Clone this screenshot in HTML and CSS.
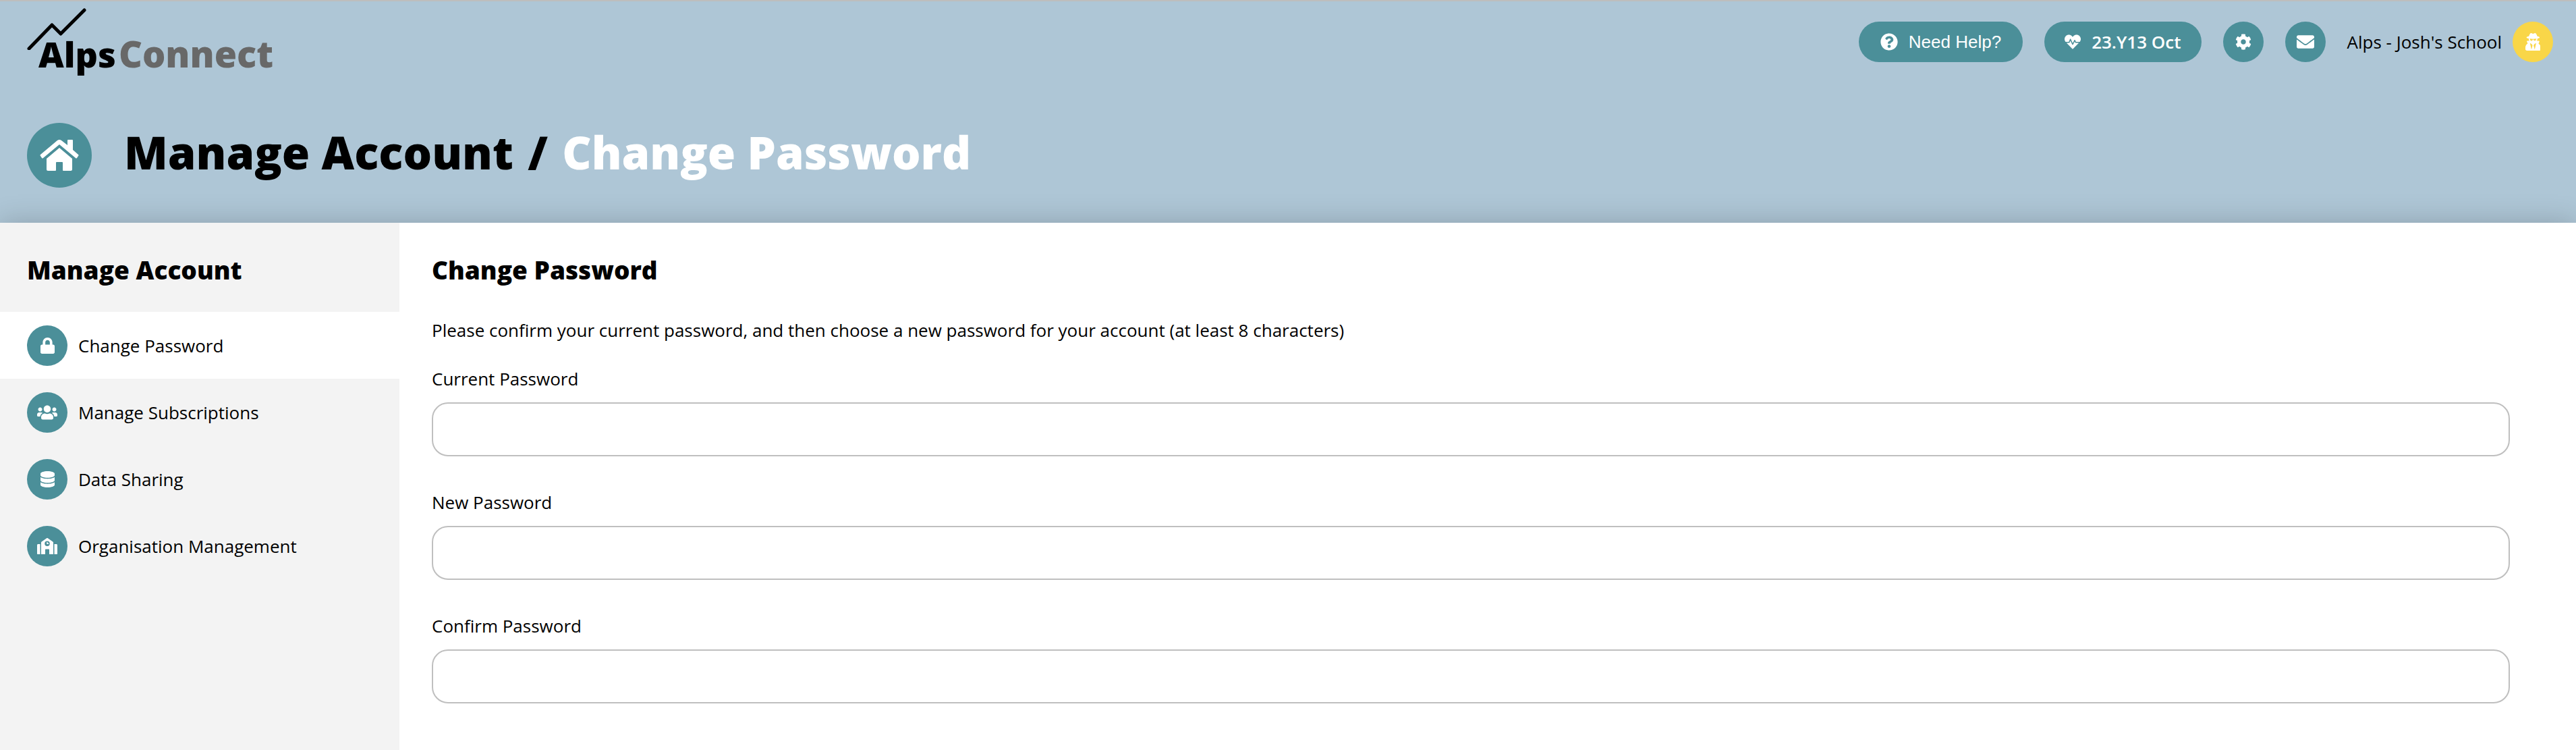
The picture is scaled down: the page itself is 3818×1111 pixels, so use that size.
FILE: index.html
```
<!DOCTYPE html>
<html lang="en">

<head>
  <meta charset="UTF-8">
  <meta name="viewport" content="width=device-width, initial-scale=1.0">
  <title>Alps Connect - Change Password</title>
  <link rel="stylesheet" href="styles.css">
</head>

<body>
  <header class="header">
    <div class="topbar">
      <a href="#" class="logo" aria-label="Alps Connect">
        <svg class="logo-peak" viewBox="0 0 88 62" aria-hidden="true">
          <path d="M3 60L37 25L50 38L85 3" />
        </svg>
        <span class="logo-alps">Alps</span>
        <span class="logo-connect">Connect</span>
      </a>
      <div class="tools">
        <button type="button" class="pill help">
          <svg viewBox="0 0 512 512" aria-hidden="true">
            <path d="M504 256c0 137-111 248-248 248S8 393 8 256 119 8 256 8s248 111 248 248zM262.700 90c-54.500 0-89.300 23-116.500 63.800-3.500 5.300-2.400 12.400 2.700 16.300l34.700 26.300c5.200 3.900 12.600 3 16.700-2.100 17.900-22.700 30.100-35.800 57.300-35.800 20.400 0 45.700 13.100 45.700 33 0 15-12.400 22.700-32.500 34C247.100 238.500 216 254.900 216 296v4c0 6.600 5.400 12 12 12h56c6.600 0 12-5.400 12-12v-1.300c0-28.500 83.200-29.600 83.200-106.700 0-58-60.200-102-116.500-102zM256 338c-25.400 0-46 20.600-46 46s20.600 46 46 46 46-20.600 46-46-20.600-46-46-46z" />
          </svg>
          Need Help?
        </button>
        <button type="button" class="pill period">
          <svg viewBox="0 0 512 512" aria-hidden="true">
            <path d="M320.200 243.800l-49.700 99.400c-6 12.100-23.400 11.700-28.900-.6l-56.900-126.300-30 71.700H60.600l182.500 186.500c7.100 7.300 18.600 7.300 25.700 0L451.400 288H342.300l-22.100-44.200zM473.700 73.900l-2.400-2.500c-51.500-52.600-135.800-52.600-187.400 0L256 100l-27.900-28.500c-51.500-52.700-135.900-52.700-187.400 0l-2.400 2.400C-10.400 123.700-12.500 203 31 256h102.400l35.900-86.200c5.400-12.900 23.600-13.200 29.400-.4l58.200 129.300 49-97.900c5.900-11.800 22.700-11.800 28.600 0l27.600 55.200H481c43.500-53 41.400-132.300-7.300-182.100z" />
          </svg>
          23.Y13 Oct
        </button>
        <button type="button" class="circle" aria-label="Settings">
          <svg viewBox="0 0 512 512" aria-hidden="true">
            <path d="M487.400 315.700l-42.600-24.600c4.300-23.200 4.300-47 0-70.200l42.600-24.600c4.900-2.800 7.100-8.600 5.500-14-11.100-35.600-30-67.800-54.700-94.600-3.800-4.100-10-5.100-14.800-2.300L380.800 110c-17.900-15.400-38.500-27.300-60.800-35.100V25.800c0-5.600-3.900-10.500-9.400-11.700-36.700-8.200-74.300-7.800-109.200 0-5.500 1.200-9.400 6.100-9.400 11.700V75c-22.200 7.900-42.800 19.800-60.800 35.100L88.700 85.500c-4.900-2.800-11-1.900-14.800 2.300-24.700 26.700-43.600 58.900-54.700 94.600-1.700 5.400.6 11.200 5.500 14L67.300 221c-4.300 23.200-4.300 47 0 70.200l-42.600 24.600c-4.900 2.800-7.100 8.600-5.500 14 11.100 35.600 30 67.800 54.700 94.600 3.800 4.100 10 5.100 14.800 2.300l42.600-24.600c17.900 15.400 38.500 27.300 60.800 35.100v49.200c0 5.600 3.900 10.500 9.400 11.700 36.700 8.200 74.300 7.800 109.200 0 5.500-1.200 9.400-6.100 9.400-11.700v-49.200c22.200-7.900 42.800-19.800 60.800-35.100l42.600 24.600c4.900 2.800 11 1.900 14.800-2.300 24.700-26.700 43.600-58.900 54.700-94.600 1.500-5.500-.7-11.300-5.600-14.100zM256 336c-44.100 0-80-35.900-80-80s35.900-80 80-80 80 35.900 80 80-35.900 80-80 80z" />
          </svg>
        </button>
        <button type="button" class="circle" aria-label="Messages">
          <svg class="mail" viewBox="0 0 512 512" aria-hidden="true">
            <path d="M502.300 190.800c3.900-3.100 9.700-.2 9.700 4.700V400c0 26.500-21.500 48-48 48H48c-26.500 0-48-21.500-48-48V195.600c0-5 5.700-7.800 9.700-4.700 22.400 17.400 52.100 39.500 154.100 113.600 21.100 15.400 56.700 47.800 92.200 47.600 35.700.3 72-32.800 92.300-47.600 102-74.100 131.600-96.300 154-113.700zM256 320c23.200.4 56.600-29.200 73.400-41.400 132.700-96.300 142.800-104.700 173.400-128.700 5.800-4.500 9.200-11.500 9.200-18.900v-19c0-26.500-21.500-48-48-48H48c-26.500 0-48 21.500-48 48v19c0 7.400 3.400 14.300 9.200 18.900 30.600 23.900 40.700 32.400 173.400 128.700 16.800 12.200 50.200 41.800 73.400 41.400z" />
          </svg>
        </button>
        <div class="user">
          <span>Alps - Josh's School</span>
          <button type="button" class="circle user-btn" aria-label="User menu">
            <svg viewBox="0 0 448 512" aria-hidden="true">
              <path d="M383.900 308.300l23.900-62.600c4-10.500-3.700-21.700-15-21.700h-58.500c11-18.900 17.800-40.600 17.800-64v-.3c39.200-7.800 64-19.100 64-31.700 0-13.300-27.300-25.100-70.100-33-9.200-32.800-27-65.800-40.600-82.800-9.500-11.900-25.900-15.600-39.500-8.800l-27.600 13.800c-9 4.500-19.600 4.500-28.600 0L182.100 3.400c-13.600-6.800-30-3.100-39.500 8.800-13.500 17-31.400 50-40.600 82.800-42.700 7.900-70 19.700-70 33 0 12.600 24.800 23.900 64 31.700v.3c0 23.400 6.800 45.100 17.800 64H56.300c-11.500 0-19.200 11.700-14.700 22.300l25.800 60.200C27.300 329.800 0 372.700 0 422.400v44.800C0 491.900 20.100 512 44.800 512h358.400c24.700 0 44.800-20.100 44.800-44.800v-44.800c0-48.400-25.800-90.400-64.100-114.100zM176 480l-41.600-192 49.600 32 24 40-32 120zm96 0l-32-120 24-40 49.600-32L272 480zm41.700-298.500c-3.900 11.900-7 24.600-16.500 33.400-10.100 9.300-48 22.400-64-25-2.800-8.400-15.400-8.400-18.300 0-17 50.200-56 32.400-64 25-9.500-8.800-12.700-21.500-16.500-33.400-.8-2.500-6.300-5.700-6.300-5.800v-10.800c28.300 3.600 61 5.800 96 5.800s67.700-2.100 96-5.800v10.800c-.1.100-5.600 3.200-6.400 5.800z" />
            </svg>
          </button>
        </div>
      </div>
    </div>
    <div class="title-row">
      <a href="#" class="circle home" aria-label="Home">
        <svg viewBox="0 0 58 46" aria-hidden="true">
          <path d="M26 1Q29-1 32 1L41 8V1Q41 0 42 0H48Q49 0 49 1V15L57 22Q58 23 57 24L55 27Q54 28 53 27L29 7L5 27Q4 28 3 27L1 24Q0 23 1 22ZM29 12L48 28V44Q48 46 46 46H35Q34 46 34 45V34Q34 33 33 33H25Q24 33 24 34V45Q24 46 23 46H12Q10 46 10 44V28Z" />
        </svg>
      </a>
      <h1 class="title">Manage Account <span class="slash">/</span> <span class="title-page">Change Password</span></h1>
    </div>
  </header>

  <main class="main">
    <nav class="sidebar">
      <h2 class="heading">Manage Account</h2>
      <a href="#" class="menu-item active">
        <span class="circle">
          <svg viewBox="0 0 448 512" aria-hidden="true">
            <path d="M400 224h-24v-72C376 68.200 307.800 0 224 0S72 68.200 72 152v72H48c-26.500 0-48 21.500-48 48v192c0 26.500 21.500 48 48 48h352c26.500 0 48-21.500 48-48V272c0-26.500-21.500-48-48-48zm-104 0H152v-72c0-39.700 32.300-72 72-72s72 32.300 72 72v72z" />
          </svg>
        </span>
        Change Password
      </a>
      <a href="#" class="menu-item">
        <span class="circle">
          <svg viewBox="0 0 640 512" aria-hidden="true">
            <path d="M96 224c35.300 0 64-28.700 64-64s-28.700-64-64-64-64 28.700-64 64 28.700 64 64 64zm448 0c35.300 0 64-28.700 64-64s-28.700-64-64-64-64 28.700-64 64 28.700 64 64 64zm32 32h-64c-17.600 0-33.500 7.100-45.100 18.600 40.300 22.100 68.900 62 75.100 109.400h66c17.700 0 32-14.300 32-32v-32c0-35.300-28.700-64-64-64zm-256 0c61.900 0 112-50.100 112-112S381.900 32 320 32 208 82.100 208 144s50.100 112 112 112zm76.800 32h-8.300c-20.800 10-43.900 16-68.500 16s-47.600-6-68.500-16h-8.300C179.600 288 128 339.600 128 403.200V432c0 26.500 21.500 48 48 48h288c26.500 0 48-21.500 48-48v-28.800c0-63.600-51.600-115.200-115.200-115.200zm-223.700-13.400C161.500 263.100 145.600 256 128 256H64c-35.300 0-64 28.700-64 64v32c0 17.700 14.300 32 32 32h65.900c6.300-47.400 34.900-87.300 75.200-109.400z" />
          </svg>
        </span>
        Manage Subscriptions
      </a>
      <a href="#" class="menu-item">
        <span class="circle">
          <svg viewBox="0 0 448 512" aria-hidden="true">
            <path d="M448 80v48c0 44.200-100.300 80-224 80S0 172.200 0 128V80C0 35.800 100.300 0 224 0s224 35.800 224 80zM393.200 214.700c20.800-7.400 39.900-16.900 54.800-28.600V288c0 44.200-100.300 80-224 80S0 332.200 0 288V186.100c14.900 11.800 34 21.200 54.800 28.600C99.700 230.700 159.500 240 224 240s124.300-9.300 169.200-25.300zM0 346.100c14.900 11.800 34 21.200 54.800 28.600C99.700 390.700 159.500 400 224 400s124.300-9.300 169.200-25.300c20.800-7.400 39.900-16.900 54.800-28.600V432c0 44.200-100.300 80-224 80S0 476.200 0 432V346.100z" />
          </svg>
        </span>
        Data Sharing
      </a>
      <a href="#" class="menu-item">
        <span class="circle">
          <svg viewBox="0 0 640 512" aria-hidden="true">
            <path fill-rule="evenodd" d="M0 224c0-18 14-32 32-32h64v320H16c-9 0-16-7-16-16zM544 192h64c18 0 32 14 32 32v272c0 9-7 16-16 16h-80zM128 142c0-11 5-21 14-27L302 5c11-7 25-7 36 0l160 110c9 6 14 16 14 27v370H384V368c0-9-7-16-16-16h-96c-9 0-16 7-16 16v144H128zM320 96a80 80 0 1 0 0 160 80 80 0 1 0 0-160zM320 128c9 0 16 7 16 16v16h16c9 0 16 7 16 16s-7 16-16 16h-32c-9 0-16-7-16-16v-32c0-9 7-16 16-16z" />
          </svg>
        </span>
        Organisation Management
      </a>
    </nav>

    <section class="content">
      <h2 class="heading">Change Password</h2>
      <p class="intro">Please confirm your current password, and then choose a new password for your account (at least 8 characters)</p>
      <form class="form">
        <div class="field">
          <label for="current">Current Password</label>
          <input type="password" id="current">
        </div>
        <div class="field">
          <label for="new">New Password</label>
          <input type="password" id="new">
        </div>
        <div class="field">
          <label for="confirm">Confirm Password</label>
          <input type="password" id="confirm">
        </div>
      </form>
    </section>
  </main>
</body>

</html>
```
FILE: styles.css
```
* {
  box-sizing: border-box;
}

body {
  margin: 0;
  min-height: 100vh;
  display: flex;
  flex-direction: column;
  font-family: "Open Sans", sans-serif;
  font-size: 26px;
  line-height: 36px;
  color: #000;
  background: #fff;
}

a {
  color: inherit;
  text-decoration: none;
}

button {
  border: 0;
  font: inherit;
  cursor: pointer;
}

/* header */
.header {
  padding: 0 34px 52px 40px;
  border-top: 2px solid #bdbdbd;
  background: #aec6d6;
}

.topbar {
  display: flex;
  justify-content: space-between;
  align-items: flex-start;
  min-height: 180px;
}

.logo {
  position: relative;
  display: flex;
  align-items: baseline;
  gap: 4px;
  padding: 42px 0 0 17px;
  font-size: 52px;
  font-weight: 800;
  line-height: 70px;
}

.logo-peak {
  position: absolute;
  top: 10px;
  left: 0;
  width: 88px;
  height: 62px;
  fill: none;
  stroke: #000;
  stroke-width: 5;
  stroke-linecap: round;
  stroke-linejoin: round;
}

.logo-connect {
  font-size: 54px;
  color: #686868;
}

.tools {
  display: flex;
  align-items: center;
  gap: 32px;
  padding-top: 30px;
}

.pill {
  display: flex;
  align-items: center;
  gap: 16px;
  height: 60px;
  padding: 0 32px;
  border-radius: 30px;
  color: #fff;
  background: #4b8f99;
}

.pill svg {
  width: 24px;
  height: 24px;
  fill: #fff;
}

.help {
  font-family: "Liberation Sans", Arial, sans-serif;
}

.help svg {
  width: 26px;
  height: 26px;
}

.period {
  padding: 0 30px;
  font-weight: 600;
}

.circle {
  flex: none;
  display: flex;
  align-items: center;
  justify-content: center;
  width: 60px;
  height: 60px;
  padding: 0;
  border-radius: 50%;
  background: #4b8f99;
}

.circle svg {
  height: 24px;
  fill: #fff;
}

.circle .mail {
  height: 26px;
}

.user {
  display: flex;
  align-items: center;
  gap: 16px;
}

.user-btn {
  background: #f9d648;
}

.user-btn svg {
  height: 26px;
}

.title-row {
  display: flex;
  align-items: center;
  gap: 48px;
  height: 96px;
}

.home {
  width: 96px;
  height: 96px;
}

.home svg {
  height: 46px;
}

.title {
  margin: 0;
  padding-bottom: 10px;
  font-size: 67px;
  font-weight: 800;
  line-height: 80px;
}

.slash {
  margin: 0 4px;
}

.title-page {
  color: #fff;
}

/* page */
.main {
  flex: 1;
  display: flex;
  background: #fff;
  box-shadow: 0 0 40px rgba(0, 0, 0, 0.2);
}

.sidebar {
  flex: none;
  width: 592px;
  background: #f3f3f3;
}

.heading {
  margin: 0;
  font-size: 37px;
  font-weight: 800;
  line-height: 48px;
}

.sidebar .heading {
  padding: 46px 40px 38px;
}

.menu-item {
  display: flex;
  align-items: center;
  gap: 16px;
  height: 99px;
  padding: 0 40px;
}

.menu-item.active {
  background: #fff;
}

.content {
  flex: 1;
  padding: 46px 98px 40px 48px;
}

.intro {
  margin: 47px 0 36px;
}

.form {
  display: flex;
  flex-direction: column;
  gap: 50px;
}

.field {
  display: flex;
  flex-direction: column;
  gap: 17px;
}

.field input {
  width: 100%;
  height: 80px;
  padding: 0 24px;
  border: 2px solid #bfbfbf;
  border-radius: 24px;
  font: inherit;
  background: #fff;
}
```
